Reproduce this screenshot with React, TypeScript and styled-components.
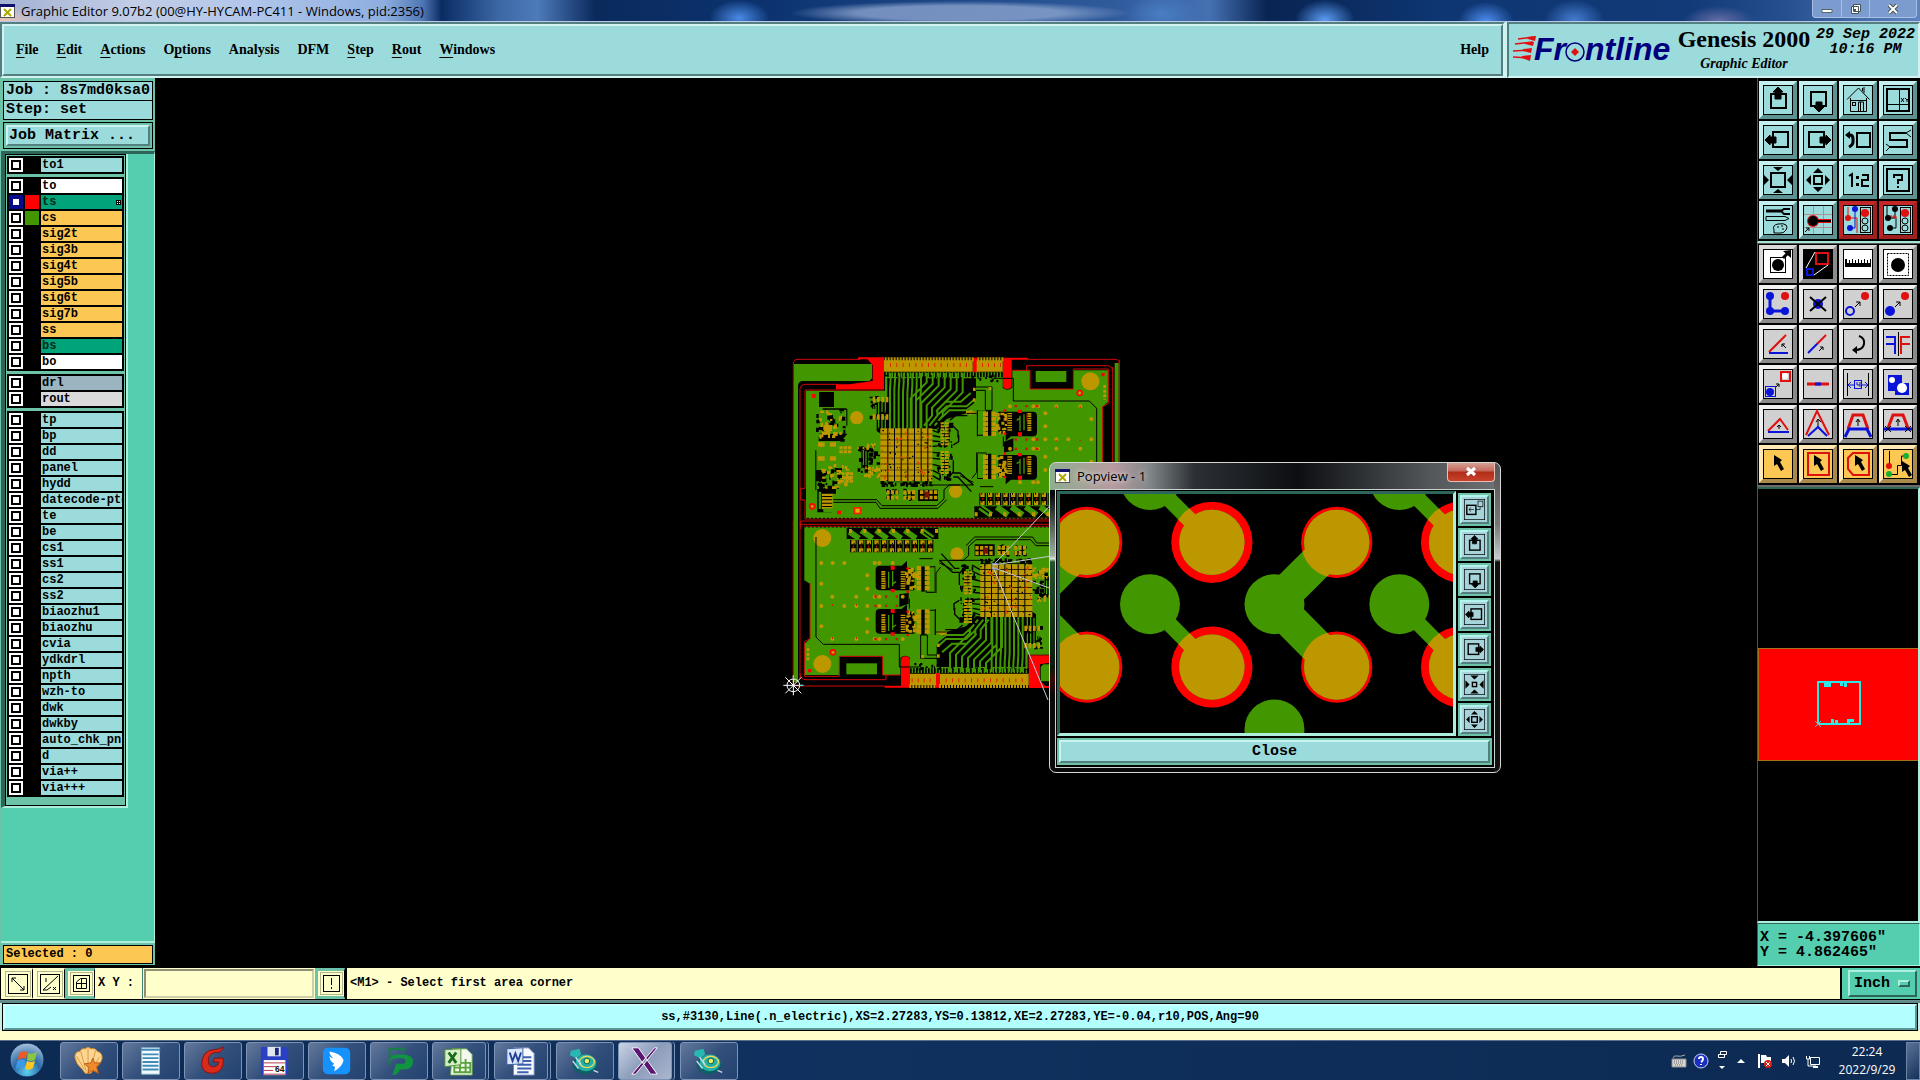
import React from "react";
import styled, { createGlobalStyle, css } from "styled-components";

const mono = `"Liberation Mono", "DejaVu Sans Mono", monospace`;
const serif = `"Liberation Serif", "DejaVu Serif", serif`;
const ui = `"Open Sans", "Noto Sans", sans-serif`;

const c = {
  teal: "#9bdbdb",
  tealLight: "#c9f4f2",
  tealDark: "#537f80",
  green: "#54ceaf",
  greenFrame: "#6cc3a8",
  greenLight: "#aeeedd",
  greenDark: "#2d6659",
  cream: "#ffffcc",
  orange: "#fcc752",
};

const Global = createGlobalStyle`
  *, *::before, *::after { box-sizing: border-box; }
  body { margin: 0; background: #000; }
  button, input, select { margin: 0; padding: 0; border-radius: 0; color: inherit; font: inherit; }
  svg { display: block; }
`;

const bevel = (w: number, light: string, dark: string) => css`
  border-style: solid;
  border-width: ${w}px;
  border-color: ${light} ${dark} ${dark} ${light};
`;

/* ---------- window ---------- */

const Page = styled.div`
  display: flex;
  flex-direction: column;
  min-height: 100vh;
  overflow: hidden;
  color: #000;
  font-family: ${mono};
  font-weight: bold;
`;

const TitleBar = styled.header`
  display: flex;
  align-items: center;
  height: 22px;
  border-bottom: 1px solid #b9c8e4;
  font: 13px/20px ${ui};
  background:
    radial-gradient(ellipse 40px 16px at 2px 22px, #f0c7b4, transparent),
    radial-gradient(ellipse 170px 12px at 50% 13px, #8ba3cdcc 60%, transparent),
    radial-gradient(ellipse 30px 18px at 38.5% 18px, #4a8ae6, transparent),
    radial-gradient(ellipse 36px 20px at 60.5% 14px, #4a7ec4, transparent),
    radial-gradient(ellipse 30px 20px at 69% 20px, #5c9cf4, transparent),
    radial-gradient(ellipse 28px 20px at 77.4% 22px, #4f8ff2, transparent),
    radial-gradient(ellipse 30px 20px at 82% 20px, #457cd0, transparent),
    radial-gradient(ellipse 36px 16px at 89.5% 22px, #6b70a8, transparent),
    linear-gradient(90deg, #a3b2d3 0, #c2cde6 7%, #b1c6ea 13%, #8eaee0 20%, #5077b5 22%, #0a2c63 23%, #3c68a6 26%, #4d7ab9 28%, #0a2a5c 31%, #0c3370 40%, #2f5b9c 58%, #4571b2 63%, #082452 66%, #0e3672 75%, #123a78 88%, #254f8f 93%, #5d83c0 100%);
`;

const TitleText = styled.h1`
  flex: 1;
  margin: 0 0 0 5px;
  font: inherit;
`;

const WindowButtons = styled.div`
  display: flex;
  align-self: flex-start;
  height: 18px;
  margin-right: 3px;
  border: 1px solid #a9c0e4;
  border-top: 0;
  border-radius: 0 0 4px 4px;
  background: #7c9ccf;
`;

const WindowButton = styled.button<{ $wide?: boolean }>`
  display: grid;
  place-items: center;
  width: ${(p) => (p.$wide ? 47 : 28)}px;
  border: 0;
  border-left: 1px solid #a9c0e4;
  background: transparent;
  &:first-child { border-left: 0; }
`;

const Header = styled.div`
  display: flex;
  gap: 2px;
  height: 56px;
  background: ${c.tealLight};
`;

const Sunk = css`
  border: 2px solid ${c.tealDark};
  border-right-color: #d3f3f2;
  border-bottom-color: #d3f3f2;
  background: ${c.teal};
`;

const MenuFrame = styled.div`
  ${Sunk}
  display: flex;
  flex: 1;
`;

const Menu = styled.nav`
  ${bevel(2, "#d3f3f2", c.tealDark)}
  display: flex;
  flex: 1;
  align-items: center;
  gap: 18px;
  padding: 0 12px 0;
`;

const MenuItem = styled.button<{ $last?: boolean }>`
  margin-left: ${(p) => (p.$last ? "auto" : "0")};
  border: 0;
  background: transparent;
  font: bold 14px/20px ${serif};
  u { text-decoration-thickness: 1px; text-underline-offset: 3px; }
`;

const Brand = styled.div`
  ${Sunk}
  display: flex;
  width: 413px;
  padding: 2px 2px 0 4px;
`;

const Product = styled.div`
  flex: 1;
  text-align: center;
  font-family: ${serif};
`;

const ProductName = styled.div`
  font-size: 24px;
  line-height: 26px;
`;

const ProductPart = styled.div`
  font-size: 14px;
  line-height: 24px;
  font-style: italic;
`;

const Stamp = styled.time`
  width: 101px;
  padding-top: 1px;
  font-size: 15px;
  line-height: 15px;
  font-style: italic;
  text-align: center;
  white-space: nowrap;
`;

const Main = styled.main`
  display: flex;
  flex: 1;
`;

/* ---------- layer panel ---------- */

const Side = styled.aside`
  display: flex;
  flex-direction: column;
  width: 155px;
  padding: 3px 0 0 1px;
  margin: 0 1px 2px 0;
  background: ${c.greenFrame};
`;

const Info = styled.div`
  height: 20px;
  margin: 0 2px -1px;
  padding-left: 2px;
  border: 1px solid #000;
  background: ${c.teal};
  font-size: 15px;
  line-height: 18px;
  white-space: nowrap;
`;

const MatrixBox = styled.div`
  margin: 3px 2px 2px;
  padding: 2px;
  border: 1px solid #000;
`;

const MatrixButton = styled.button`
  ${bevel(2, c.tealLight, c.tealDark)}
  width: 100%;
  height: 21px;
  padding-left: 1px;
  background: ${c.teal};
  font-size: 15px;
  line-height: 15px;
  text-align: left;
`;

const Scroll = styled.div`
  flex: 1;
  border: solid ${c.greenDark};
  border-width: 3px 1px 2px 0;
  border-right-color: ${c.greenLight};
  border-bottom-color: ${c.greenLight};
  background: ${c.green};
`;

const ListFrame = styled.div`
  width: 127px;
  border: solid ${c.greenDark};
  border-width: 0 2px 2px 4px;
  border-right-color: ${c.greenLight};
  border-bottom-color: ${c.greenLight};
`;

const List = styled.div`
  display: flex;
  flex-direction: column;
  gap: 3px;
  padding: 1px 1px 8px;
  border: 1px solid #000;
  background: ${c.greenFrame};
`;

const Group = styled.div`
  display: flex;
  flex-direction: column;
  gap: 2px;
  padding: 2px;
  background: #000;
`;

const Layer = styled.label`
  display: grid;
  grid-template-columns: 14px 14px 1fr;
  column-gap: 2px;
  height: 14px;
`;

const LayerTick = styled.input<{ $on?: boolean }>`
  appearance: none;
  width: 14px;
  height: 14px;
  border: 2px solid ${(p) => (p.$on ? "#0a0a8c" : "#fff")};
  outline: 2px solid ${(p) => (p.$on ? "#0a0a8c" : "#000")};
  outline-offset: -4px;
  background: #fff;
`;

const Swatch = styled.span<{ $color: string }>`
  background: ${(p) => p.$color};
`;

const LayerName = styled.span<{ $color: string; $ink?: string }>`
  display: flex;
  align-items: center;
  justify-content: space-between;
  overflow: hidden;
  padding: 0 1px;
  background: ${(p) => p.$color};
  color: ${(p) => p.$ink || "#000"};
  font-size: 12px;
  line-height: 14px;
  white-space: nowrap;
`;

const Selected = styled.div`
  height: 19px;
  margin: 2px 2px 1px;
  padding-left: 2px;
  border: 1px solid #000;
  background: ${c.orange};
  font-size: 12px;
  line-height: 16px;
`;

/* ---------- drawing area ---------- */

const Canvas = styled.section`
  position: relative;
  flex: 1;
  overflow: hidden;
  background: #000;
`;

const Board = styled.svg`
  position: absolute;
  left: 624px;
  top: 267px;
`;

const Popup = styled.section`
  position: absolute;
  left: 893px;
  top: 384px;
  width: 452px;
  padding: 0 5px 4px;
  border: 1px solid #d7d7d7;
  border-radius: 7px;
  background:
    linear-gradient(180deg, transparent 10%, #9fb0a2 30%, #dfe5e0 31%, #26522e 32%, #0c1a0e 66%, #3a0a0a 70%, #0b0b0b 75%) left / 6px 100% no-repeat,
    linear-gradient(180deg, #555 0, #777 20%, #c8ccd0 31%, #111 32%) right / 6px 100% no-repeat,
    linear-gradient(90deg, #8fae8f 0, #b79aa0 14%, #83898a 22%, #2c3035 32%, #0c0e11 55%, #54585b 85%, #6e7274) top / 100% 27px no-repeat,
    #08090b;
`;

const PopupTitle = styled.header`
  display: flex;
  align-items: center;
  height: 26px;
  font: 13px/20px ${ui};
  h2 { flex: 1; margin: 0 0 0 6px; font: inherit; text-shadow: 0 0 6px #fff8, 0 0 6px #fff8; }
`;

const PopupX = styled.button`
  display: grid;
  place-items: center;
  align-self: flex-start;
  width: 48px;
  height: 19px;
  border: 1px solid #e8c0b8;
  border-top: 0;
  border-radius: 0 0 4px 4px;
  background: linear-gradient(#d5a095 0, #c4665a 45%, #b02c18 50%, #c8422a);
`;

const PopupBody = styled.div`
  display: grid;
  grid-template-columns: 1fr 34px;
  gap: 2px;
  padding: 1px 2px 2px 1px;
  border: 1px solid #c9d3d0;
  background: #000;
`;

const PopupView = styled.div`
  border: solid ${c.greenDark};
  border-width: 3px;
  border-right-color: ${c.greenLight};
  border-bottom-color: ${c.greenLight};
  background: #000;
`;

const PopupTools = styled.div`
  display: flex;
  flex-direction: column;
  gap: 2px;
  padding-top: 2px;
`;

const CloseFrame = styled.div`
  grid-column: 1 / -1;
  padding: 2px;
  background: ${c.greenFrame};
`;

const CloseButton = styled.button`
  ${bevel(2, c.tealLight, c.tealDark)}
  width: 100%;
  height: 23px;
  background: ${c.teal};
  font-size: 15px;
  line-height: 18px;
`;

const SmallTool = styled.button`
  ${bevel(4, "#b4f4ee", c.tealDark)}
  display: grid;
  place-items: center;
  width: 33px;
  height: 33px;
  outline: 2px solid ${c.greenFrame};
  outline-offset: -2px;
  background: #a6d4da;
`;

/* ---------- tool column ---------- */

const Tools = styled.aside`
  display: flex;
  flex-direction: column;
  width: 163px;
  margin-bottom: 1px;
`;

const ToolGrid = styled.div<{ $gray?: boolean }>`
  display: grid;
  grid-template-columns: repeat(4, 38px);
  gap: 2px;
  padding: ${(p) => (p.$gray ? "1px 1px 2px" : "3px 1px 2px")};
  border-left: 1px solid ${(p) => (p.$gray ? "#666" : c.greenDark)};
  border-bottom: 2px solid ${(p) => (p.$gray ? "#6b6b6b" : "#a6e4d6")};
  border-top: ${(p) => (p.$gray ? "1px solid #555" : "0")};
  background: #000;
`;

const toneMap: Record<string, [string, string, string]> = {
  teal: [c.teal, "#c4f1ef", "#5e9191"],
  red: [c.teal, "#c22626", "#a02020"],
  white: ["#fff", "#d9d9d9", "#8c8c8c"],
  gray: ["#d0d0d0", "#f0f0f0", "#8a8a8a"],
  orange: [c.orange, "#ffe9b4", "#a98a4a"],
};

const ToolButton = styled.button<{ $tone: string }>`
  ${(p) => bevel(4, toneMap[p.$tone][1], toneMap[p.$tone][2])}
  width: 38px;
  height: 38px;
  background: ${(p) => toneMap[p.$tone][0]};
`;

const Overview = styled.div`
  display: flex;
  flex: 1;
  flex-direction: column;
  justify-content: center;
  padding-bottom: 2px;
  border: 2px solid ${c.greenDark};
  border-left-width: 1px;
  border-right-color: ${c.greenLight};
  border-bottom-color: ${c.greenLight};
  background: #000;
`;

const OverviewSheet = styled.div`
  display: grid;
  place-items: center;
  height: 113px;
  border: solid #a3711a;
  border-width: 1px 0 1px 1px;
  background: #f00;
`;

const Coords = styled.div`
  height: 43px;
  padding: 6px 2px;
  border: 1px solid ${c.greenDark};
  border-right-color: ${c.greenLight};
  border-bottom-color: ${c.greenLight};
  background: ${c.green};
  font-size: 15px;
  line-height: 15px;
  white-space: pre;
`;

/* ---------- bottom bars ---------- */

const CommandBar = styled.form`
  display: flex;
  align-items: stretch;
  height: 33px;
  border: solid #000;
  border-width: 1px 0 1px 1px;
  background: ${c.cream};
  font-size: 12px;
`;

const SnapButton = styled.button<{ $on?: boolean }>`
  display: grid;
  place-items: center;
  width: ${(p) => (p.$on ? 30 : 32)}px;
  border: ${(p) => (p.$on ? 3 : 2)}px solid ${(p) => (p.$on ? c.greenFrame : c.cream)};
  border-right: 1px solid #000;
  background: ${c.cream};
  svg { outline: 1px solid #b5b58c; outline-offset: 2px; }
`;

const XYLabel = styled.label`
  width: 48px;
  padding-left: 3px;
  border-right: 1px solid #3f8272;
  font-size: 12px;
  line-height: 31px;
  white-space: nowrap;
`;

const XYInput = styled.input`
  width: 170px;
  margin: 1px;
  padding: 0 6px;
  ${bevel(2, "#8f8f74", "#d0d0a8")}
  background: ${c.cream};
  outline: 1px solid ${c.cream};
`;

const Message = styled.output`
  flex: 1;
  padding-left: 3px;
  border: solid #000;
  border-width: 0 2px 0 2px;
  line-height: 31px;
`;

const Unit = styled.label`
  display: flex;
  width: 78px;
  padding: 2px 3px 2px 6px;
  background: ${c.green};
`;

const UnitFace = styled.span`
  ${bevel(2, c.greenLight, c.greenDark)}
  display: flex;
  flex: 1;
  align-items: center;
  padding: 0 5px 0 4px;
`;

const UnitSelect = styled.select`
  appearance: none;
  flex: 1;
  width: 40px;
  border: 0;
  background: transparent;
  font-size: 15px;
`;

const UnitMark = styled.span`
  ${bevel(2, c.greenLight, c.greenDark)}
  width: 12px;
  height: 7px;
`;

const StatusBar = styled.div`
  display: flex;
  padding: 2px 2px 9px;
  border-top: 1px solid #6d8f8f;
  background: linear-gradient(#5e8a8a 0 2px, #c8efe6 2px 29px, ${c.cream} 29px);
`;

const StatusText = styled.output`
  ${bevel(2, "#c9ffff", "#5e9696")}
  flex: 1;
  height: 26px;
  margin: 1px;
  outline: 1px solid #000;
  background: #b3ffff;
  font-size: 12px;
  line-height: 22px;
  text-align: center;
`;

const Taskbar = styled.footer`
  display: flex;
  align-items: center;
  height: 40px;
  border-top: 1px solid #5b6f8c;
  background: linear-gradient(90deg, #0c2a52, #10315f 40%, #0c2a52);
`;

const StartButton = styled.button`
  width: 60px;
  height: 38px;
  padding-left: 9px;
  border: 0;
  background: transparent;
`;

const TaskButton = styled.button<{ $active?: boolean; $stack?: boolean }>`
  display: grid;
  place-items: center;
  width: ${(p) => (p.$stack ? 54 : 58)}px;
  height: 38px;
  margin-right: ${(p) => (p.$stack ? 8 : 4)}px;
  border: 1px solid #7d93b5;
  border-radius: 3px;
  background: ${(p) =>
    p.$active
      ? "linear-gradient(135deg, #c9d4e6, #8c9cba 50%, #aab6cf)"
      : "linear-gradient(135deg, #64799b, #33507c 50%, #24426f)"};
  box-shadow: ${(p) => (p.$stack ? "2px 0 0 #17355f, 3px 0 0 #7d93b5" : "none")};
`;

const Tray = styled.div`
  display: flex;
  align-items: center;
  height: 38px;
  margin-left: auto;
`;

const TrayButton = styled.button<{ $w: number }>`
  display: grid;
  place-items: center;
  width: ${(p) => p.$w}px;
  height: 32px;
  border: 0;
  background: transparent;
`;

const Clock = styled.time`
  width: 78px;
  color: #fff;
  font: 12px/18px ${ui};
  text-align: center;
`;

const ShowDesktop = styled.button`
  width: 14px;
  height: 38px;
  border: 1px solid #6d83a6;
  background: linear-gradient(135deg, #5d7396, #14305a);
`;

/* ---------- icons ---------- */

const arrows = {
  up: "M15 2l5 5h-2v7h-6V7h-2z",
  down: "M16 27l-5-5h2v-5h6v5h2z",
  left: "M2 15l5-5v2h6v6H7v2z",
  right: "M28 15l-5-5v2h-6v6h6v2z",
};

const box = (x: number, y: number, w: number, h: number, s = "#000", sw = 2) => (
  <rect x={x} y={y} width={w} height={h} fill="none" stroke={s} strokeWidth={sw} />
);
const dot = (x: number, y: number, r: number, f: string) => <circle cx={x} cy={y} r={r} fill={f} />;
const ln = (d: string, s = "#000", w = 1) => <path d={d} fill="none" stroke={s} strokeWidth={w} />;
const R = "#e01010";
const B = "#0a14d8";
const pointer = "M0 0l8 5-2 2 4 7-3 2-4-7-3 2z";

const icons: Record<string, React.ReactNode> = {
  up: <>{box(8, 9, 15, 14)}<path d={arrows.up} stroke="#000" /></>,
  down: <>{box(8, 7, 15, 14)}<path d={arrows.down} stroke="#000" /></>,
  left: <>{box(10, 7, 15, 15)}<path d={arrows.left} stroke="#000" /></>,
  right: <>{box(6, 7, 15, 15)}<path d={arrows.right} stroke="#000" /></>,
  home: <>{ln("M7.500 13v13.500h16V13M4 14.500L15.500 3l11 11.500M8 15.500h15M19.500 3v3M21 2v6M15.500 26v-9h5v9M17.500 17v9", "#000", 1)}{box(9.5, 17.5, 3, 3, "#000", 1)}</>,
  xy: <>{box(4, 4, 22, 22)}{ln("M16.500 4v22M4 19.500h22")}{ln("M18 13l3 4M21 13l-3 4M22 13l2 2 2-2M24 15v2")}</>,
  undo: <>{box(14, 8, 13, 14)}{ln("M4 10h3q3 0 3 4v3q0 3-4 5", "#000", 3)}<path d="M2 10l5-4v8z" /></>,
  snake: <>{ln("M23 8H7v7h17v7H6", "#000", 2)}{ln("M23 8l5-3M23 8l5 4M7 22l-4-3M7 22l-4 4")}</>,
  fitIn: <>{box(8, 8, 14, 14)}<path d="M15 6l-5-4h10zM15 24l-5 4h10zM6 15l-5-5v10zM24 15l5-5v10z" /></>,
  shrink: <>{box(12, 12, 6, 6)}<path d="M15 8l-6-6h12zM15 22l-6 6h12zM8 15L2 9v12zM22 15l6-6v12z" /></>,
  fitOut: <>{box(11, 11, 8, 8)}<path d="M15 3l5 5H10zM15 27l5-5H10zM3 15l5-5v10zM27 15l-5-5v10z" /></>,
  ratio: <>{ln("M6 11l3-2v13M19 10h6v5h-6v6h7", "#000", 2)}<path d="M13 11h3v3h-3zM13 18h3v3h-3z" /></>,
  help: <>{box(4, 4, 22, 22)}{ln("M11 13v-3h8v5h-4v4M15 21v2", "#000", 2)}</>,
  toolsIcon: <>{ln("M3 6h15", "#000", 3)}{ln("M27 4h-6l-3 2 3 3h6", "#000", 2)}{ln("M3 11.500h19l4 2-4 2H3zM11 25q-2-5 4-6t8 1 0 5-5 3-7 0zM14 22h2M18 21h2M19 24h2")}</>,
  redPoint: <>{ln("M10.500 1v28M20.500 1v28M1 9.500h28M1 22.500h28", "#b58f8f")}{dot(10, 16, 6, R)}{dot(10, 16, 5, "#000")}{ln("M15 16h13", R, 4)}{ln("M15 16h13", "#000", 2)}{ln("M2 27l4-4M3 23h3v3")}</>,
  lights1: <>{ln("M5 2v11h9v15", R)}{ln("M12 4v19H6", B)}{dot(12, 4, 3, B)}{dot(5, 13, 3, R)}{dot(7, 23, 3, B)}{box(17.5, 2.5, 10, 25, "#000", 1)}{dot(22, 8, 4, R)}<g fill="none" stroke="#000"><circle cx="22" cy="16" r="3" /><circle cx="22" cy="23" r="3" /></g></>,
  lights2: <>{ln("M4 1v11M12 5v8H6M13 13v10H8")}{ln("M8 14v-4M11 14v-4M8 12h6", R)}{dot(12, 4, 3, "#000")}{dot(5, 13, 3, "#000")}{dot(7, 23, 3, "#000")}{box(17.5, 2.5, 10, 25, "#000", 1)}{dot(22, 8, 4, R)}<g fill="none" stroke="#000"><circle cx="22" cy="16" r="3" /><circle cx="22" cy="23" r="3" /></g></>,
  grow: <>{box(7.5, 8.5, 15, 15, "#000", 1)}{dot(15, 16, 6, "#000")}{ln("M20 9l5-5", "#000", 3)}<path d="M28 1v8l-8-7z" /></>,
  morph: <><rect width="30" height="30" fill="#000" />{box(13, 4, 12, 11, R, 2)}{box(4, 20, 6, 6, B, 2)}{ln("M3 19L12 3M11 26l14-10", "#fff")}</>,
  ruler: <path d="M2 18V10h2v4h2v-3h1v3h2v-4h1v4h2v-3h1v3h2v-4h1v4h2v-3h1v3h2v-4h1v4h2v-3h1v3h2v-4h1v8z" />,
  area: <><rect x="4.500" y="4.500" width="21" height="22" fill="none" stroke="#000" strokeDasharray="2 1" />{dot(15, 16, 7, "#000")}</>,
  net: <>{ln("M7 7v15h16", B, 3)}{dot(7, 7, 4, B)}{dot(7, 22, 4, B)}{dot(22, 22, 4, B)}{dot(22, 7, 4, R)}</>,
  del: <>{dot(15, 15, 5, B)}{ln("M7 8l16 14M23 8L7 22", "#000", 2)}</>,
  copyTo: <>{dot(22, 7, 4, R)}<circle cx="7" cy="22" r="4" fill="none" stroke={B} strokeWidth="2" />{ln("M12 18l5-5M13 13h4v4")}</>,
  moveTo: <>{dot(22, 7, 4, R)}{dot(7, 22, 5, B)}{ln("M12 18l5-5M13 13h4v4")}</>,
  rotate: <>{ln("M6 23L23 6", R, 2)}{ln("M6 24h19", B, 2)}{ln("M23 19l-4-4M19 18v-3h3")}</>,
  slide: <>{ln("M5 24l10-10", B, 2)}{ln("M14 15l9-9", R, 2)}{ln("M16 22l4-4M17 18h3v3")}</>,
  turn: <>{ln("M16 7q6 2 5 8t-9 6", "#000", 2)}<path d="M9 21l5-4v8z" /></>,
  mirror: <>{ln("M3 8h9v17M3 15h9", B, 2)}{ln("M27 8h-9v17M27 15h-9", R, 2)}{ln("M15.500 3v24")}</>,
  transfer: <>{box(18, 3, 9, 9, R, 2)}{dot(22, 7, 3, "#fff")}{box(2.5, 17.5, 10, 10, B, 1)}{dot(7, 23, 4, B)}{ln("M13 18l3-3M13 15h3v3")}</>,
  segment: <>{ln("M4 15h22", R, 3)}{ln("M12 15h6", B, 3)}</>,
  spacing: <>{ln("M4.500 4v23M25.500 4v23")}{box(11.5, 11.5, 7, 8, B, 1)}{ln("M5 16h6M19 16h6M8 13l-3 3 3 3M22 13l3 3-3 3M14 13v3h3M17 13v5", B)}</>,
  merge: <><path d="M5 6h14v8h7v12H12v-4H5z" fill={B} />{dot(9, 11, 3, "#fff")}{dot(19, 19, 5, "#fff")}</>,
  tri: <>{ln("M5 22l12-12 8 11", R, 2)}{ln("M5 23h21", B, 2)}{ln("M16 20v-4M14 18l2-2 2 2")}</>,
  peak: <>{ln("M3 26L14 2l12 24", R, 2)}{ln("M5 27l10-9 9 9", B, 2)}{ln("M15 17v-6M13 13l2-3 3 3")}</>,
  trap: <>{ln("M5 20l5-14h10l5 14", R, 3)}{ln("M2 28l4-8h18l4 8", B, 3)}{ln("M15 17v-6M13 13l2-3 2 3")}</>,
  trapX: <>{ln("M5 19l5-13h10l5 13", R, 3)}{ln("M1 20h28", B, 3)}{ln("M15 17v-6M13 13l2-3 2 3M2 17l6 6M8 17l-6 6M22 17l6 6M28 17l-6 6")}</>,
  point: <path d={pointer} transform="translate(11 6)" />,
  pointBox: <>{box(5, 4, 21, 22, R, 2)}<path d={pointer} transform="translate(11 6)" /></>,
  pointPoly: <>{ln("M10 4h16v22H10l-5-6V9z", R, 2)}<path d={pointer} transform="translate(12 6)" /></>,
  pointNet: <>{ln("M6.500 2v14M7 25.500h7.500v-9h4V7h4")}{dot(6, 17, 3, R)}{dot(6, 25, 3, "#18b030")}{dot(23, 7, 3, "#18b030")}<path d={pointer} transform="translate(19 12)" /></>,
  popout: <>{box(4, 9, 13, 13)}{box(20, 3, 7, 8, "#000", 1)}{ln("M17 15h6v-4M7 15h7M10 12l-3 3 3 3")}</>,
};

const Icon = ({ name, size = 30 }: { name: string; size?: number }) => (
  <svg width={size} height={size} viewBox="0 0 30 30" aria-hidden="true">
    <rect x="0.500" y="0.500" width="29" height="29" fill="none" stroke="#000" />
    {icons[name]}
  </svg>
);

const XLogo = () => (
  <svg width="16" height="16" viewBox="0 0 16 16" aria-hidden="true">
    <rect x="0.500" y="1.500" width="14" height="13" fill="#fff" stroke="#555" />
    <path d="M0 1h15v3H0z" fill="#10106a" />
    <path d="M4 6l7 7M11 6l-7 7" stroke="#b0a800" strokeWidth="2" />
  </svg>
);

/* ---------- board drawing ---------- */

const GREEN = "#429600";
const GOLD = "#bd9700";

const random = (seed: number) => () => {
  seed = (seed * 16807) % 2147483647;
  return seed / 2147483647;
};

const scatter = (x: number, y: number, w: number, h: number, n: number, a: number, b: number, seed: number) => {
  const r = random(seed);
  let d = "";
  for (let i = 0; i < n; i++) {
    const pw = Math.round(a + r() * (b - a));
    const ph = Math.round(a + r() * (b - a));
    d += `M${Math.round(x + r() * (w - pw))} ${Math.round(y + r() * (h - ph))}h${pw}v${ph}h${-pw}z`;
  }
  return d;
};

const grid = (x: number, y: number, nx: number, ny: number, dx: number, dy: number, w: number, h: number) => {
  let d = "";
  for (let i = 0; i < nx; i++) for (let j = 0; j < ny; j++) d += `M${x + i * dx} ${y + j * dy}h${w}v${h}h${-w}z`;
  return d;
};

const fan = () => {
  let d = "";
  for (let i = 0; i < 8; i++) d += `M${332 + i * 13} ${84}V${100 + i * 4}L${330 + i * 13} ${130 + i * 4}V252`;
  for (let i = 0; i < 7; i++)
    d += `M${440 + i * 18} 84V${112 + i * 5}L${392 + i * 16} ${160 + i * 7}V${i < 4 ? 252 : 212}l${i < 4 ? 0 : -24} ${i < 4 ? 0 : 30}`;
  d += "M470 212l30-28h60l22-20M480 222l28-26h52l20-16M468 200l30-30h44l30-26";
  return d;
};

const ChipCluster = ({ y, seed }: { y: number; seed: number }) => (
  <g>
    <path d={`M655 ${y + 4}h104q12 0 12 12v50q0 12-12 12h-66l-16 14v-22h-22zM592 ${y}h30v76h-30z`} fill="#000" />
    <path d={`M594 ${y}h24v73h-24z`} fill={GREEN} />
    <path d={grid(609, y + 4, 2, 5, 24, 15, 15, 13)} fill={GOLD} />
    <path d={`M624 ${y}h10v76h-10z`} fill="#000" />
    <path d={scatter(640, y + 4, 44, 68, 24, 4, 12, seed)} fill={GOLD} />
    <path d={grid(742, y + 8, 1, 8, 1, 7, 12, 5)} fill={GOLD} />
    <path d={grid(682, y + 8, 1, 8, 1, 7, 14, 4)} fill={GOLD} />
    <path d={`M720 ${y + 16}v46M732 ${y + 12}v48M710 ${y + 30}l12-8`} stroke={GREEN} strokeWidth="4" />
    <path d={`M741 ${y + 10}v24M682 ${y + 20}v20`} stroke="#d01808" strokeWidth="3" />
    <path d={`M714 ${y - 2}h12v10h-12zM714 ${y + 66}h12v12h-12z`} fill="#f00" />
    <circle cx="675" cy={y} r="4" fill="#f00" /><circle cx="675" cy={y + 70} r="4" fill="#f00" />
  </g>
);

const Half = () => (
  <g id="half">
    <path d="M42 57H276V100L268 108H70Q54 108 54 124V1012H42z" fill={GREEN} />
    <path d="M40 1022V56Q40 43 54 43H240M60 1000V130Q62 118 76 118H175" fill="none" stroke="#d00808" strokeWidth="3" />
    <path d="M234 37H312V133H168V118H208L278 108V60L262 43H234zM578 38h14v60h-14zM668 38h76v6h-49v76q0 12-13 12t-14-12z" fill="#f00" />
    <path d="M78 137H315V82H668V128Q682 140 697 128V76H750V132H880V76H985V170L968 185V350L985 360V521H78z" fill={GREEN} />
    <path d="M75 135H312M75 135V430H62V465H75V522H985M697 76H750V132H880V72H985V176L968 185V352M740 76V62H980Q998 62 998 80M744 43H1005Q1018 43 1018 58V540M62 552V528H1000" fill="none" stroke="#d00808" strokeWidth="3" />
    <path d="M80 520H985" stroke="#000" strokeWidth="3" strokeDasharray="7 5" />
    <path d="M312 46H578V80H312zM590 46H668V80H590z" fill={GOLD} />
    <path d={grid(314, 37, 30, 1, 9, 1, 6, 12) + grid(592, 37, 9, 1, 9, 1, 6, 12)} fill={GOLD} />
    <path d={grid(330, 54, 13, 1, 19, 1, 3, 12) + grid(606, 54, 4, 1, 18, 1, 3, 12)} fill="#e02800" />
    <path d={grid(312, 82, 40, 1, 9, 1, 5, 14) + scatter(316, 90, 350, 22, 50, 3, 9, 61)} fill="#000" />
    <path d="M322 100H588V165L560 205L500 222L470 252H322zM290 170h32v110l-32-22z" fill="#000" />
    <path d={fan()} fill="none" stroke={GREEN} strokeWidth="6" />
    <path d="M296 160v88M306 160v96M316 160v92" stroke={GREEN} strokeWidth="4" />
    <rect x="767" y="78" width="92" height="33" fill={GREEN} />
    <g fill={GOLD}>
      <circle cx="931" cy="109" r="27" /><circle cx="230" cy="218" r="20" /><circle cx="527" cy="439" r="20" />
      <circle cx="931" cy="487" r="27" />
    </g>
    <rect x="117" y="141" width="45" height="45" fill="#000" />

    <path d={scatter(108, 190, 92, 100, 26, 4, 14, 11) + "M128 190h72v4h-72zM199 192h3v50h-3zM118 266h84l-18 22h-58z"} fill="#000" />
    <path d={scatter(112, 192, 76, 90, 24, 6, 14, 29) + "M132 240h24v18h-24z"} fill={GOLD} />
    <path d="M114 292h20v13h-20zM150 292h18v13h-18zM114 334h20v13h-20zM150 334h18v13h-18z" fill={GOLD} />
    <path d={grid(178, 304, 3, 2, 13, 12, 10, 9) + grid(170, 382, 4, 3, 13, 11, 10, 9)} fill={GOLD} />
    <path d={scatter(108, 365, 80, 80, 28, 3, 15, 71) + "M106 316h3v120h-3zM108 375h20v34h-20z"} fill="#000" />
    <path d={scatter(118, 355, 100, 82, 28, 5, 12, 83)} fill={GOLD} />
    <path d="M112 432h56v14h-12v56h-44z" fill="#000" />
    <path d={grid(126, 446, 1, 5, 1, 10, 32, 7)} fill={GOLD} /><path d="M116 440h8v52h-8zM130 490h34v12h-34z" fill={GREEN} />
    <path d={scatter(226, 290, 76, 110, 30, 4, 13, 37)} fill="#000" />
    <path d={scatter(232, 294, 60, 22, 12, 4, 9, 17) + scatter(252, 362, 50, 40, 22, 4, 11, 19)} fill={GOLD} />
    <path d="M246 316v54M254 316v54M262 316v54" stroke="#000" strokeWidth="4" />
    <path d={scatter(264, 150, 66, 76, 24, 3, 11, 97)} fill="#000" />
    <path d={grid(278, 156, 4, 2, 13, 52, 8, 16)} fill={GOLD} />

    <rect x="301" y="250" width="156" height="158" fill={GOLD} />
    <path d={grid(301, 266, 1, 9, 1, 18, 156, 2) + grid(322, 250, 7, 1, 20, 1, 3, 158)} fill="#000" />
    <path d={scatter(301, 250, 158, 160, 50, 2, 5, 41)} fill="#000" />
    <path d={scatter(303, 252, 152, 156, 30, 2, 7, 55)} fill="#e04000" />
    <path d={scatter(300, 408, 160, 18, 40, 3, 11, 13)} fill="#000" />
    <path d="M458 256l20 8M458 272l22 4M458 288l24 2M458 304l24-2M458 322l22 2M458 340l22 2M458 358l24 6M458 376l24 12M458 392l24 14" stroke="#000" strokeWidth="4" />
    <path d={scatter(470, 226, 50, 84, 34, 4, 12, 101) + scatter(470, 314, 50, 100, 34, 4, 12, 103)} fill="#000" />
    <path d={grid(482, 232, 2, 8, 13, 9, 11, 6) + grid(482, 318, 2, 8, 13, 9, 11, 6)} fill={GOLD} />
    <path d="M510 226l16-14h36M516 240l18 18v20M520 300l16-10v-20M520 346v34l-16 20M520 384h20l40 36M520 396h14l40 44" fill="none" stroke="#000" strokeWidth="4" />

    <path d={scatter(556, 194, 40, 18, 12, 4, 9, 7)} fill={GOLD} />
    <path d="M576 126h60v70h-20v-60h-40zM560 205h36v64M592 324h28M540 392l40 20M600 425h40M420 420h160M640 100h60v68h228l22 22v300M592 196v78M590 322v60l-14 18M670 275v30" fill="none" stroke="#000" strokeWidth="3" />
    <path d="M579 128h8v10h-8zM626 126h8v10h-8zM579 160h8v10h-8z" fill={GOLD} />
    <ChipCluster y={196} seed={211} />
    <ChipCluster y={326} seed={307} />
    <path d="M672 290l28-10v38l-28 4z" fill="#000" />
    <path d="M160 464H290L306 482H470L492 462V434L508 420H540M160 472H288L300 490H474L500 464" fill="none" stroke="#000" strokeWidth="3" />
    <path d={scatter(318, 430, 38, 38, 18, 4, 12, 19) + scatter(366, 430, 40, 38, 18, 4, 12, 23) + "M414 434h60v34h-60z"} fill="#000" />
    <path d={grid(320, 436, 3, 2, 13, 16, 9, 12) + grid(370, 436, 3, 2, 13, 16, 9, 12) + grid(420, 436, 4, 2, 14, 16, 10, 11)} fill={GOLD} />
    <path d="M434 440h14v18h-14z" fill="#7c1200" />
    <path d={grid(598, 444, 11, 1, 23, 1, 20, 37) + "M583 484h275v34H583z"} fill="#000" />
    <path d={grid(601, 444, 11, 2, 23, 24, 13, 12)} fill={GOLD} />
    <path d={grid(604, 444, 11, 2, 23, 24, 3, 5)} fill="#000" />
    <path d={grid(606, 458, 11, 1, 23, 1, 4, 6)} fill="#b01800" />
    <path d="M600 486l34 24M650 486l34 24M694 486l34 24M736 486l34 24M780 486l34 24M820 486l30 20" fill="none" stroke={GREEN} strokeWidth="18" />
    <path d="M598 484l34 24M626 484l34 24M672 484l34 24M716 484l34 24M758 484l34 24M800 484l34 24" fill="none" stroke="#000" strokeWidth="4" />
    <path d={grid(584, 502, 7, 1, 43, 1, 9, 12)} fill={GOLD} />

    <g fill={GOLD}>
      {[[829, 184], [901, 184], [934, 222], [934, 283], [829, 283], [865, 283], [829, 311], [901, 311], [934, 350], [796, 205], [796, 244], [796, 283], [796, 335], [796, 375], [934, 412], [865, 412], [900, 412], [690, 184], [760, 184], [774, 184], [690, 311], [760, 311], [774, 311], [760, 283], [720, 412], [760, 412], [774, 412]].map(([x, y]) => (
        <circle key={`${x}-${y}`} cx={x} cy={y} r="6" />
      ))}
    </g>
    <path d={grid(704, 180, 3, 1, 32, 1, 7, 7) + grid(704, 280, 3, 1, 32, 1, 7, 7) + grid(704, 308, 3, 1, 32, 1, 7, 7) + grid(827, 184, 2, 2, 72, 100, 3, 5)} fill="#d81000" />
    <path d="M974 120v44" stroke={GOLD} strokeWidth="8" strokeDasharray="9 5" />
    <path d="M964 84h10v10h-10zM96 147h11v11h-11zM171 497h12v11h-12z" fill="#f00" />
    <circle cx="899" cy="144" r="10" fill="#f00" /><circle cx="899" cy="144" r="5" fill={GOLD} />
    <circle cx="97" cy="484" r="10" fill="#f00" /><circle cx="97" cy="484" r="5" fill={GOLD} />
    <path d="M220 486h24v22h-24z" fill="#f02000" /><path d="M226 491h13v12h-13z" fill="#e8b000" />
  </g>
);

const BoardDrawing = () => (
  <Board width="350" height="355" viewBox="0 0 1050 1065" role="img" aria-label="Board layers ts and cs">
    <Half />
    <use href="#half" transform="rotate(180 529 533)" />
    <g stroke="#c9c9d8" strokeWidth="3">
      <path d="M640 660L808 484M640 660L808 634M640 668L808 729M640 668L804 1065" />
    </g>
    <rect x="636" y="656" width="16" height="16" fill="none" stroke="#8fa0d8" strokeWidth="3" />
    <g fill="none" stroke="#fff" strokeWidth="3">
      <circle cx="40" cy="1021" r="19" />
      <path d="M10 1021h60M40 991v60M16 997l48 48M64 997l-48 48" />
      <path d="M58 1021h12M40 991v12" stroke="#30e0e0" />
    </g>
  </Board>
);

const Copper = () => (
  <>
    {[[316, 78], [1065, 78], [316, 451], [690, 451], [1065, 451], [690, 827]].map(([x, y]) => (
      <circle key={`${x}-${y}`} cx={x} cy={y} r="90" stroke="none" />
    ))}
    {[126, 502, 877, 1252].map((x) =>
      [265, 640].map((y) => <circle key={`${x}-${y}`} cx={x} cy={y} r="98" stroke="none" />)
    )}
    <path d="M316 78l186 187M1065 78l187 187M316 451l186 189M1065 451l187 189" strokeWidth="47" fill="none" />
    <path d="M877 265L690 451L877 640M126 265L-60 451L126 640" strokeWidth="105" fill="none" />
  </>
);

const Zoomed = () => (
  <svg width="100%" height="239" viewBox="45 120 1182 718" preserveAspectRatio="xMidYMid slice" role="img" aria-label="Magnified pads">
    <defs>
      <clipPath id="mask-openings">
        {[126, 502, 877, 1252].map((x) =>
          [265, 640].map((y) => <circle key={`${x}-${y}`} cx={x} cy={y} r={x === 502 || x === 1252 ? 122 : 107} />)
        )}
      </clipPath>
    </defs>
    <g clipPath="url(#mask-openings)"><rect x="0" y="0" width="1400" height="900" fill="#f00" /></g>
    <g fill={GREEN} stroke={GREEN}><Copper /></g>
    <g fill={GOLD} stroke={GOLD} clipPath="url(#mask-openings)"><Copper /></g>
  </svg>
);

/* ---------- data ---------- */

const menu: [string, number][] = [["File", 0], ["Edit", 0], ["Actions", 0], ["Options", 1], ["Analysis", -1], ["DFM", -1], ["Step", 0], ["Rout", 0], ["Windows", 0]];

type L = { n: string; bg?: string; sw?: string; ink?: string; on?: boolean };
const O = c.orange;
const groups: L[][] = [
  [{ n: "to1" }],
  [
    { n: "to", bg: "#fff" },
    { n: "ts", bg: "#00a37a", sw: "#f00", ink: "#002a16", on: true },
    { n: "cs", bg: O, sw: GREEN },
    ...["sig2t", "sig3b", "sig4t", "sig5b", "sig6t", "sig7b", "ss"].map((n) => ({ n, bg: O })),
    { n: "bs", bg: "#00a37a", ink: "#002a16" },
    { n: "bo", bg: "#fff" },
  ],
  [{ n: "drl", bg: "#9bb5c0" }, { n: "rout", bg: "#dadada" }],
  ["tp", "bp", "dd", "panel", "hydd", "datecode-pto", "te", "be", "cs1", "ss1", "cs2", "ss2", "biaozhu1", "biaozhu", "cvia", "ydkdrl", "npth", "wzh-to", "dwk", "dwkby", "auto_chk_pnl", "d", "via++", "via+++"].map((n) => ({ n })),
];

const viewTools: [string, string, string?][] = [
  ["up", "Pan up"], ["down", "Pan down"], ["home", "Home"], ["xy", "Go to XY"],
  ["left", "Pan left"], ["right", "Pan right"], ["undo", "Previous view"], ["snake", "Serpentine"],
  ["fitIn", "Zoom out"], ["fitOut", "Zoom in"], ["ratio", "Scale"], ["help", "Query"],
  ["toolsIcon", "Setup"], ["redPoint", "Grid snap"], ["lights1", "Net check", "red"], ["lights2", "DRC", "red"],
];
const editTools: [string, string, string][] = [
  ["grow", "Resize", "white"], ["morph", "Transform", "white"], ["ruler", "Measure", "white"], ["area", "Area", "white"],
  ["net", "Add", "gray"], ["del", "Delete", "gray"], ["copyTo", "Copy", "gray"], ["moveTo", "Move", "gray"],
  ["rotate", "Rotate", "gray"], ["slide", "Stretch", "gray"], ["turn", "Turn", "gray"], ["mirror", "Mirror", "gray"],
  ["transfer", "Change symbol", "gray"], ["segment", "Break", "gray"], ["spacing", "Spacing", "gray"], ["merge", "Merge", "gray"],
  ["tri", "Triangle move", "gray"], ["peak", "Peak move", "gray"], ["trap", "Parallel move", "gray"], ["trapX", "Parallel cut", "gray"],
  ["point", "Select", "orange"], ["pointBox", "Select box", "orange"], ["pointPoly", "Select polygon", "orange"], ["pointNet", "Select net", "orange"],
];
const popTools: [string, string][] = [["popout", "Link view"], ["up", "Up"], ["down", "Down"], ["left", "Left"], ["right", "Right"], ["shrink", "Zoom in"], ["fitOut", "Zoom out"]];

const Genesis = () => (
  <>
    <ellipse cx="17" cy="20" rx="13" ry="10" fill="#0d5f63" />
    <ellipse cx="18" cy="18" rx="11" ry="9" fill="#22b0a6" />
    <ellipse cx="19" cy="17" rx="8" ry="6" fill="none" stroke="#e6d860" strokeWidth="1.500" />
    <circle cx="19" cy="16" r="3" fill="#e8f060" stroke="#0a5a50" />
    <path d="M2 5l9-2 2 6-5 4-7-3z" fill="#28b8b0" />
    <path d="M7 12l6 8M4 16l6 8M26 26l5 2" stroke="#c8d8e8" strokeWidth="1.500" />
  </>
);

const tasks: { name: string; art: React.ReactNode; stack?: boolean; active?: boolean }[] = [
  { name: "Shell", art: <><path d="M2 12Q2 6 7 6q2-4 6-3 3-3 6 0 5-1 7 3 5 1 5 7-1 6-9 12l-3 4h-6l-3-4Q3 19 2 12z" fill="#fcd590" stroke="#d98a28" /><path d="M16 28V3M14 27L8 5M18 27l6-22M12 25L4 11M20 25l8-13" stroke="#d99a40" fill="none" /><path d="M21 13l2 5 6 0-4 4 2 7-6-3-5 3 1-6-5-4 7-1z" fill="#ef8a2c" stroke="#b85a10" /></> },
  { name: "Notepad", art: <><path d="M7 2h19v28H7z" fill="#f4fbff" stroke="#8cb8d0" /><path d="M6 4h21M8 9h17M8 13h17M8 17h17M8 21h17M8 25h17" stroke="#3f8cb8" strokeWidth="2" /></> },
  { name: "G editor", art: <path d="M28 1q-2 7-9 6-8 2-7 10 1 6 7 5 4-1 4-5h-6l2-4h9q1 14-10 16Q6 30 5 20 5 5 18 4q5 0 10-3z" fill="#d92a1c" stroke="#8a1008" /> },
  { name: "Floppy 64", art: <><path d="M2 1h26l3 3v27H2z" fill="#2b3fc4" /><path d="M9 1h14v10H9z" fill="#dfe6ee" /><path d="M17 2h4v8h-4z" fill="#1a2780" /><path d="M5 15h23v16H5z" fill="#fff" /><path d="M5 18h23M5 22h13M5 26h10M5 30h23" stroke="#b03040" /><text x="17" y="28" fontSize="9" fontFamily="Liberation Sans" fill="#111">64</text></> },
  { name: "Bird", art: <><rect x="2" y="2" width="29" height="28" rx="5" fill="#1592fb" /><path d="M9 6q12 2 15 9-1 7-10 12l1-5-3-1 2-2q-5-3-5-8 2 2 4 2-4-3-4-7z" fill="#fff" /></> },
  { name: "Print", art: <><path d="M7 14V3h15v4M7 20v-7" fill="none" stroke="#16803c" strokeWidth="2" /><path d="M13 9h8q11 0 11 8t-11 8h-3q-2 6-8 6l4-12h6q4 0 4-3t-4-3h-7q-3 0-5 3 0-6 5-7z" fill="#109440" /></> },
  { name: "Excel", stack: true, art: <><path d="M10 3h15l6 6v22H8z" fill="#f3f9ef" stroke="#5f9a46" /><path d="M12 18h17v10H12zM18 18v10M24 14v14M12 23h17" fill="none" stroke="#58a43a" strokeWidth="2" /><path d="M2 4l17-1v17L2 22z" fill="#d7efc9" stroke="#4f8f30" /><path d="M6 7l8 11M14 7L6 18" stroke="#1b6b1b" strokeWidth="3" /></> },
  { name: "Word", stack: true, art: <><path d="M9 2h16l6 6v23H9z" fill="#f7faff" stroke="#7088b8" /><path d="M19 12h9M19 16h9M13 20h15M13 24h15M13 28h12" stroke="#3c62b0" strokeWidth="2" /><path d="M2 3l17-1v17L2 20z" fill="#dbe6f8" stroke="#3c5ca0" /><path d="M5 7l3 9 3-8 3 8 3-9" fill="none" stroke="#1d3f94" strokeWidth="2" /></> },
  { name: "Genesis", art: <Genesis /> },
  { name: "X server", stack: true, active: true, art: <><path d="M3 2h7l20 28h-7zM30 2h-3L3 30h4z" fill="#5b1672" stroke="#fff" /></> },
  { name: "Genesis toolkit", art: <Genesis /> },
];

/* ---------- app ---------- */

export default function App() {
  return (
    <Page>
      <Global />
      <TitleBar>
        <XLogo />
        <TitleText>Graphic Editor 9.07b2 (00@HY-HYCAM-PC411 - Windows, pid:2356)</TitleText>
        <WindowButtons>
          <WindowButton aria-label="Minimize"><svg width="12" height="12"><path d="M1 6.500h10v3H1z" fill="#fff" stroke="#566" /></svg></WindowButton>
          <WindowButton aria-label="Restore"><svg width="12" height="12"><path d="M3.500 1.500h7v7h-7zM1.500 3.500h7v7h-7z" fill="#fff" stroke="#455" /><path d="M4 6h2v2H4z" fill="#456" /></svg></WindowButton>
          <WindowButton $wide aria-label="Close window"><svg width="12" height="12"><path d="M2 2l8 8M10 2l-8 8" stroke="#455" strokeWidth="4" /><path d="M2 2l8 8M10 2l-8 8" stroke="#fff" strokeWidth="2" /></svg></WindowButton>
        </WindowButtons>
      </TitleBar>

      <Header>
        <MenuFrame>
          <Menu>
            {menu.map(([t, i]) => (
              <MenuItem key={t}>{i < 0 ? t : <>{t.slice(0, i)}<u>{t[i]}</u>{t.slice(i + 1)}</>}</MenuItem>
            ))}
            <MenuItem $last>Help</MenuItem>
          </Menu>
        </MenuFrame>
        <Brand>
          <svg width="160" height="48" viewBox="0 0 160 48" role="img" aria-label="Frontline">
            <path d="M5 13l17-2M2 18l18-2M0 25l18-1M0 31l17 1" stroke="#e01010" strokeWidth="1.500" />
            <path d="M14 11l9-1-1 5-7-2zM12 16l9 0-1 4-8-2zM10 23l9-1-1 5-8-2zM9 30l9-1-1 6-8-3z" fill="#e01010" />
            <g fill="#00007c" fontFamily="Liberation Sans, Arial, sans-serif" fontSize="32" fontWeight="bold" fontStyle="italic">
              <text x="21" y="34">Fr</text>
              <text x="72" y="34">ntline</text>
            </g>
            <circle cx="62" cy="26" r="9" fill={c.teal} stroke="#00007c" strokeWidth="1.500" />
            <path d="M62 22l4 4-4 4-4-4z" fill="#e01010" />
          </svg>
          <Product>
            <ProductName>Genesis 2000</ProductName>
            <ProductPart>Graphic Editor</ProductPart>
          </Product>
          <Stamp>29 Sep 2022<br />10:16 PM</Stamp>
        </Brand>
      </Header>

      <Main>
        <Side>
          <Info>Job : 8s7md0ksa0</Info>
          <Info>Step: set</Info>
          <MatrixBox><MatrixButton>Job Matrix ...</MatrixButton></MatrixBox>
          <Scroll>
            <ListFrame>
              <List>
                {groups.map((g, i) => (
                  <Group key={i}>
                    {g.map((l) => (
                      <Layer key={l.n}>
                        <LayerTick type="checkbox" $on={l.on} defaultChecked={l.on} />
                        <Swatch $color={l.sw || "#000"} />
                        <LayerName $color={l.bg || c.teal} $ink={l.ink}>
                          {l.n}
                          {l.on && <svg width="5" height="5"><path d="M0 0h5v5H0z" /><path d="M1 1h1v1H1zM3 1h1v1H3zM1 3h1v1H1zM3 3h1v1H3z" fill="#fff" /></svg>}
                        </LayerName>
                      </Layer>
                    ))}
                  </Group>
                ))}
              </List>
            </ListFrame>
          </Scroll>
          <Selected>Selected : 0</Selected>
        </Side>

        <Canvas>
          <BoardDrawing />
          <Popup>
            <PopupTitle>
              <XLogo />
              <h2>Popview - 1</h2>
              <PopupX aria-label="Close popview"><svg width="12" height="12"><path d="M2 2l8 7M10 2l-8 7" stroke="#fff" strokeWidth="3" /></svg></PopupX>
            </PopupTitle>
            <PopupBody>
              <PopupView><Zoomed /></PopupView>
              <PopupTools>
                {popTools.map(([n, t]) => <SmallTool key={t} aria-label={t}><Icon name={n} size={21} /></SmallTool>)}
              </PopupTools>
              <CloseFrame><CloseButton>Close</CloseButton></CloseFrame>
            </PopupBody>
          </Popup>
        </Canvas>

        <Tools>
          <ToolGrid>
            {viewTools.map(([n, t, tone]) => <ToolButton key={n} $tone={tone || "teal"} aria-label={t}><Icon name={n} /></ToolButton>)}
          </ToolGrid>
          <ToolGrid $gray>
            {editTools.map(([n, t, tone]) => <ToolButton key={n} $tone={tone} aria-label={t}><Icon name={n} /></ToolButton>)}
          </ToolGrid>
          <Overview>
            <OverviewSheet>
              <svg width="50" height="50" viewBox="0 0 50 50" role="img" aria-label="Board position">
                <rect x="4" y="3" width="42" height="42" fill="none" stroke="#2ee8e8" strokeWidth="2" />
                <path d="M10 4h7v4h-7zM26 4h3v3h-3zM30 4h3v4h-3zM17 40h3v4h-3zM21 41h3v3h-3zM33 40h7v3h-4v2h-3z" fill="#2ee8e8" />
                <path d="M1 42l6 6M7 42l-6 6" stroke="#8ab0b0" />
              </svg>
            </OverviewSheet>
          </Overview>
          <Coords>{'X = -4.397606"\nY = 4.862465"'}</Coords>
        </Tools>
      </Main>

      <CommandBar onSubmit={(e) => e.preventDefault()}>
        <SnapButton type="button" aria-label="Free angle"><svg width="20" height="20">{box(0.5, 0.5, 19, 19, "#000", 1)}{ln("M4 4l12 12M4 8V4h4M16 12v4h-4")}</svg></SnapButton>
        <SnapButton type="button" aria-label="Fixed angle"><svg width="20" height="20">{box(0.5, 0.5, 19, 19, "#000", 1)}{ln("M18 2L3 16h4l4-3M13 13l3 3M16 13l-3 3M6 4v4")}</svg></SnapButton>
        <SnapButton type="button" $on aria-label="Grid"><svg width="17" height="17">{box(0.5, 0.5, 16, 16, "#000", 1)}{ln("M3.500 13.500V7l4-3.500h6v10zM3 8.500h10M8.500 3v10")}</svg></SnapButton>
        <XYLabel htmlFor="xy">X Y :</XYLabel>
        <XYInput id="xy" />
        <SnapButton type="button" $on aria-label="Alert"><svg width="17" height="17">{box(0.5, 0.5, 16, 16, "#000", 1)}{ln("M8.500 3v7M8.500 12v2", "#000", 1)}</svg></SnapButton>
        <Message>{"<M1> - Select first area corner"}</Message>
        <Unit>
          <UnitFace>
            <UnitSelect aria-label="Units"><option>Inch</option><option>MM</option></UnitSelect>
            <UnitMark />
          </UnitFace>
        </Unit>
      </CommandBar>

      <StatusBar>
        <StatusText>ss,#3130,Line(.n_electric),XS=2.27283,YS=0.13812,XE=2.27283,YE=-0.04,r10,POS,Ang=90</StatusText>
      </StatusBar>

      <Taskbar>
        <StartButton aria-label="Start">
          <svg width="37" height="37" viewBox="0 0 37 37">
            <defs><radialGradient id="orb" cx="50%" cy="85%" r="80%"><stop offset="0" stopColor="#5fd0f0" /><stop offset="0.500" stopColor="#2c6aa8" /><stop offset="1" stopColor="#9ab8d8" /></radialGradient></defs>
            <circle cx="18" cy="18" r="17" fill="url(#orb)" stroke="#0b2850" />
            <path d="M10 11q4-3 8-1l-1 7q-4-2-8 1z" fill="#ef5a24" /><path d="M19 11q4 2 9-1l-2 8q-4 2-8 0z" fill="#8cc63e" />
            <path d="M8 19q4-3 8-1l-1 8q-4-2-8 1z" fill="#3c9ae8" /><path d="M18 19q4 2 8 0l-2 7q-4 3-8 1z" fill="#fcc820" />
          </svg>
        </StartButton>
        {tasks.map((t) => (
          <TaskButton key={t.name} $active={t.active} $stack={t.stack} aria-label={t.name}>
            <svg width="32" height="32" viewBox="0 0 34 32">{t.art}</svg>
          </TaskButton>
        ))}
        <Tray>
          <TrayButton $w={22} aria-label="Keyboard"><svg width="16" height="14"><path d="M1 5h14v8H1z" fill="#d8d8d0" stroke="#888" /><path d="M3 7h10M3 9h10M4 11h8" stroke="#667" strokeDasharray="1 1" /><path d="M2 4q1-3 4-2t8-1" stroke="#aaa" fill="none" /></svg></TrayButton>
          <TrayButton $w={22} aria-label="Help center"><svg width="16" height="16"><circle cx="8" cy="8" r="7" fill="#1a2fc0" stroke="#c8d0f0" /><path d="M6 6q0-2 2-2t2 2-2 3M8 11v1" stroke="#fff" strokeWidth="2" fill="none" /></svg></TrayButton>
          <TrayButton $w={20} aria-label="Language bar"><svg width="12" height="22"><path d="M4.500 1.500h6v3h-6zM2.500 4.500h6v3h-6z" fill="#0c2a52" stroke="#fff" /><path d="M3 16h6l-3 3z" fill="#fff" /></svg></TrayButton>
          <TrayButton $w={18} aria-label="Show hidden icons"><svg width="9" height="6"><path d="M0 5h8L4 1z" fill="#fff" /></svg></TrayButton>
          <TrayButton $w={30} aria-label="Action center"><svg width="16" height="16"><path d="M2 1v14" stroke="#fff" strokeWidth="2" /><path d="M4 2h5l1 2h4v6H4z" fill="#fff" /><circle cx="11" cy="11" r="4" fill="#d82018" /><path d="M9 9l4 4M13 9l-4 4" stroke="#fff" /></svg></TrayButton>
          <TrayButton $w={18} aria-label="Volume"><svg width="16" height="14"><path d="M1 5h3l4-4v12l-4-4H1z" fill="#fff" /><path d="M10 5q1 2 0 4M12 3q3 4 0 8" stroke="#fff" fill="none" /></svg></TrayButton>
          <TrayButton $w={30} aria-label="Network"><svg width="16" height="14"><path d="M5.500 3.500h9v7h-9zM1.500 2v3h3V2M3 5v7h8" stroke="#fff" fill="none" /><path d="M8 13h5" stroke="#fff" strokeWidth="2" /></svg></TrayButton>
          <Clock>22:24<br />2022/9/29</Clock>
          <ShowDesktop aria-label="Show desktop" />
        </Tray>
      </Taskbar>
    </Page>
  );
}
